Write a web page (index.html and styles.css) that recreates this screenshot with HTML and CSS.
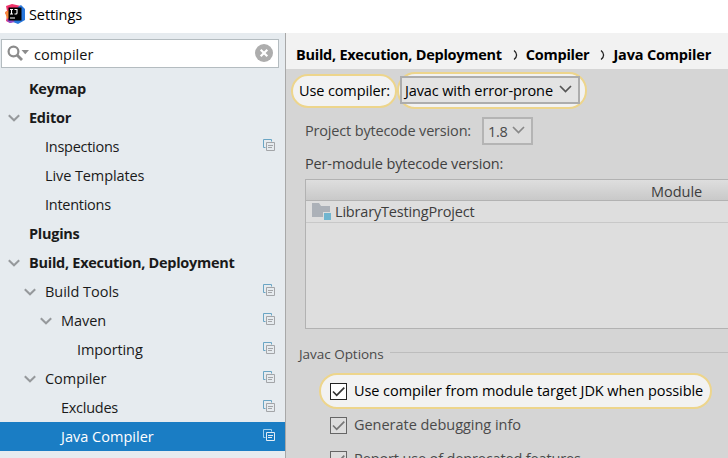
FILE: index.html
```
<!DOCTYPE html>
<html lang="en">
<head>
<meta charset="utf-8">
<title>Settings</title>
<link rel="stylesheet" href="styles.css">
</head>
<body>
<svg class="defs" width="0" height="0">
  <symbol id="chev" viewBox="0 0 12 8"><path d="M.8 1.2 6 6.300l5.200-5.100" fill="none" stroke="currentColor" stroke-width="2"/></symbol>
  <symbol id="down" viewBox="0 0 13 8"><path d="M1 1 6.500 6.500 12 1" fill="none" stroke="currentColor" stroke-width="1.700"/></symbol>
  <symbol id="copy" viewBox="0 0 12 12"><path d="M2.500 8.500h-2v-8h8v2" fill="none" stroke="var(--back)"/><path d="M3.500 3.500h8v8h-8z" fill="none" stroke="var(--front)"/><path d="M5 6.500h5M5 8.500h4" stroke="var(--front)"/></symbol>
  <symbol id="check" viewBox="0 0 15 15"><path d="M2 7.500 5.700 11.300 13.300 3.700" fill="none" stroke="currentColor" stroke-width="1.700"/></symbol>
</svg>
<header class="titlebar">
  <svg class="logo" width="20" height="21" viewBox="0 0 20 21">
    <path d="M1 2 7 0l9 2-3 14L5 19 1 17l1-5-2-3 2-2z" fill="#f0336b"/>
    <path d="M0 8l4-2v8l-2 1z" fill="#f98a3c"/>
    <path d="M13 3l3-2 4 4v11l-7 4-5-2z" fill="#2877dc"/>
    <path d="M5 19l-3-2 2-3 6 4z" fill="#8c4fd0"/>
    <path d="M3.500 3.500h13v13h-13z" fill="#000"/>
    <path d="M5 5.500h3M6.500 5.500v4.500M5 10h3M9.500 5.500h2.500v3.500q0 1-1 1H9.500M5 14h5" fill="none" stroke="#fff" stroke-width="1.100"/>
  </svg>
  <span class="t1">Settings</span>
</header>
<div class="window">
  <aside class="sidebar">
    <div class="search">
      <svg width="23" height="17" viewBox="0 0 23 17"><circle cx="6.500" cy="6.500" r="4.900" fill="none" stroke="#8c8c8c" stroke-width="2.200"/><path d="m10 10 5 5" stroke="#8c8c8c" stroke-width="2.800"/><path d="M14.500 5h7.500l-3.750 4.200z" fill="#8c8c8c"/></svg>
      <span class="query">compiler</span>
      <svg width="18" height="18" viewBox="0 0 18 18"><circle cx="9" cy="9" r="9" fill="#adadad"/><path d="m5.700 5.700 6.600 6.600m0-6.600-6.600 6.600" stroke="#fff" stroke-width="2.200"/></svg>
    </div>
    <nav class="tree">
      <div class="row root"><span>Keymap</span></div>
      <div class="row root"><svg class="arrow"><use href="#chev"/></svg><span>Editor</span></div>
      <div class="row l1"><span class="t3">Inspections</span><svg class="copy"><use href="#copy"/></svg></div>
      <div class="row l1"><span class="t1">Live Templates</span></div>
      <div class="row l1"><span class="t3">Intentions</span></div>
      <div class="row root"><span>Plugins</span></div>
      <div class="row root"><svg class="arrow"><use href="#chev"/></svg><span>Build, Execution, Deployment</span></div>
      <div class="row l1"><svg class="arrow"><use href="#chev"/></svg><span>Build Tools</span><svg class="copy"><use href="#copy"/></svg></div>
      <div class="row l2"><svg class="arrow"><use href="#chev"/></svg><span>Maven</span><svg class="copy"><use href="#copy"/></svg></div>
      <div class="row l3"><span class="t1">Importing</span><svg class="copy"><use href="#copy"/></svg></div>
      <div class="row l1"><svg class="arrow"><use href="#chev"/></svg><span>Compiler</span><svg class="copy"><use href="#copy"/></svg></div>
      <div class="row l2"><span class="t3">Excludes</span><svg class="copy"><use href="#copy"/></svg></div>
      <div class="row l2 selected"><span class="w1">Java Compiler</span><svg class="copy"><use href="#copy"/></svg></div>
    </nav>
  </aside>
  <main class="main">
    <div class="crumbs">
      <span>Build, Execution, Deployment</span>
      <svg class="sep" viewBox="0 0 5 10"><path d="M1 .5q2.600 2 2.600 4.500T1 9.500" fill="none" stroke="#222" stroke-width="1.300"/></svg>
      <span>Compiler</span>
      <svg class="sep" viewBox="0 0 5 10"><path d="M1 .5q2.600 2 2.600 4.500T1 9.500" fill="none" stroke="#222" stroke-width="1.300"/></svg>
      <span class="last">Java Compiler</span>
    </div>
    <div class="content">
      <div class="compiler">
        <label class="pill">Use compiler:</label>
        <div class="pill pill-select"><div class="select"><span>Javac with error-prone</span><svg class="down"><use href="#down"/></svg></div></div>
      </div>
      <div class="bytecode"><span>Project bytecode version:</span><div class="select small"><span class="t3">1.8</span><svg class="down"><use href="#down"/></svg></div></div>
      <div class="permodule">Per-module bytecode version:</div>
      <div class="table">
        <div class="thead"><span>Module</span></div>
        <div class="trow">
          <svg width="20" height="18" viewBox="0 0 20 18"><path d="M0 0h7l2 3h9v11H0z" fill="#acb1b8"/><path d="M11 9h9v9h-9z" fill="#dedede"/><path d="M12 10h7v7h-7z" fill="#70b5cf"/></svg>
          <span>LibraryTestingProject</span>
        </div>
      </div>
      <div class="group"><span>Javac Options</span></div>
      <div class="option active"><svg class="box"><use href="#check"/></svg><span>Use compiler from module target JDK when possible</span></div>
      <div class="option"><svg class="box"><use href="#check"/></svg><span>Generate debugging info</span></div>
      <div class="option"><svg class="box"><use href="#check"/></svg><span class="t2">Report use of deprecated features</span></div>
    </div>
  </main>
</div>
</body>
</html>
```
FILE: styles.css
```
* { box-sizing: border-box; }
body {
  margin: 0; width: 728px; height: 458px; overflow: hidden;
  background: #fff; color: #1a1a1a;
  font: 14.5px/20px "Open Sans", "Noto Sans", sans-serif;
  letter-spacing: -.03px; white-space: nowrap;
}
svg { display: block; flex: none; }
.defs { position: absolute; }
.t1 { letter-spacing: -.1px; }
.t2 { letter-spacing: -.15px; }
.t3 { letter-spacing: -.27px; }
.w1 { letter-spacing: .02px; }

.titlebar { height: 33px; display: flex; align-items: flex-start; padding: 5px 0 0 5px; gap: 4px; color: #000; }
.logo { margin-top: -1px; }

.window { display: flex; height: 425px; }
.sidebar { width: 286px; flex: none; background: #e6ebef; border-right: 1px solid #a8a8a8; padding-top: 6px; }
.search {
  margin-left: 1px; width: 278px; height: 29px; background: #fff; border: 1px solid #b4bcc0;
  display: flex; align-items: center; padding: 0 5px; color: #111;
}
.search svg:last-child { margin-top: -1px; }
.query { flex: 1; padding: 2px 0 0 4px; letter-spacing: 0; }
.tree { margin-top: 6px; }
.row { height: 29px; display: flex; align-items: center; padding-right: 10px; --back: #6aa5c4; --front: #a3a5a8; }
.root { font-weight: 700; letter-spacing: -.27px; padding-left: 29px; }
.l1 { padding-left: 45px; }
.l2 { padding-left: 61px; }
.l3 { padding-left: 77px; }
.arrow { width: 12px; height: 8px; margin: 0 9px 0 -21px; color: #96999c; }
.copy { width: 12px; height: 12px; margin-left: auto; margin-top: -3px; }
.selected { background: #1a7dc4; color: #fff; --back: #9fd0ef; --front: #e4edf5; }

.main { flex: 1; min-width: 0; background: #d5d5d5; }
.crumbs {
  height: 36px; background: #f2f2f2; color: #000; font-weight: 700; letter-spacing: -.26px;
  display: flex; align-items: center; padding: 7px 0 0 10px;
}
.sep { width: 5px; height: 10px; margin: 0 8px 0 11px; }
.crumbs .last { letter-spacing: -.17px; }

.compiler { display: flex; align-items: center; padding: 3px 0 0 5px; height: 40px; color: #000; }
.pill { height: 34px; padding: 5px 6px; border: 2px solid #edd58c; border-radius: 17px; background: #f2f2f2; width: 106px; letter-spacing: -.12px; }
.pill-select { height: 37px; width: 190px; padding: 2px 0 0 1px; border-radius: 18px; }
.select {
  width: 180px; height: 28px; border: 2px solid #adadad; background: #e3e3e3;
  display: flex; align-items: center; justify-content: space-between; padding: 2px 6px 0 3px;
}
.down { width: 13px; height: 8px; color: #555; margin-top: -4px; }
.bytecode { display: flex; align-items: center; margin: 8px 0 0 19px; color: #4a4a4a; height: 28px; gap: 11px; letter-spacing: -.17px; }
.select.small { width: 51px; background: #dcdcdc; border-color: #b4b4b4; padding-left: 4px; }
.small .down { color: #888; }
.permodule { margin: 9px 0 0 19px; color: #3f3f3f; height: 25px; letter-spacing: -.14px; }
.table { margin-left: 19px; height: 150px; border: 1px solid #b2b2b2; border-right: 0; background: #dedede; color: #3d3d3d; }
.thead { height: 21px; background: linear-gradient(#dedede, #c9c9c9); border-bottom: 1px solid #b2b2b2; padding: 2px 0 0 345px; }
.trow { height: 22px; border-bottom: 1px solid #c8c8c8; display: flex; align-items: center; padding-left: 6px; gap: 3px; letter-spacing: -.18px; }
.trow span { padding-top: 1px; }
.group { display: flex; align-items: center; gap: 6px; margin: 15px 0 0 13px; height: 20px; font-size: 13.5px; color: #4a4a4a; }
.group::after { content: ""; flex: 1; height: 1px; background: #bdbdbd; margin-top: -3px; }
.option { display: flex; align-items: center; gap: 7px; height: 34px; margin-left: 44px; color: #4a4a4a; letter-spacing: -.03px; }
.box { width: 17px; height: 17px; border: 1px solid #666; background: #dedede; color: #777; }
.active { margin: 9px 0 -1px 33px; width: 393px; height: 36px; padding-left: 9px; border: 2px solid #edd58c; border-radius: 18px; background: #f2f2f2; color: #000; letter-spacing: -.07px; }
.active .box { border-color: #222; background: #fff; color: #333; }
```
